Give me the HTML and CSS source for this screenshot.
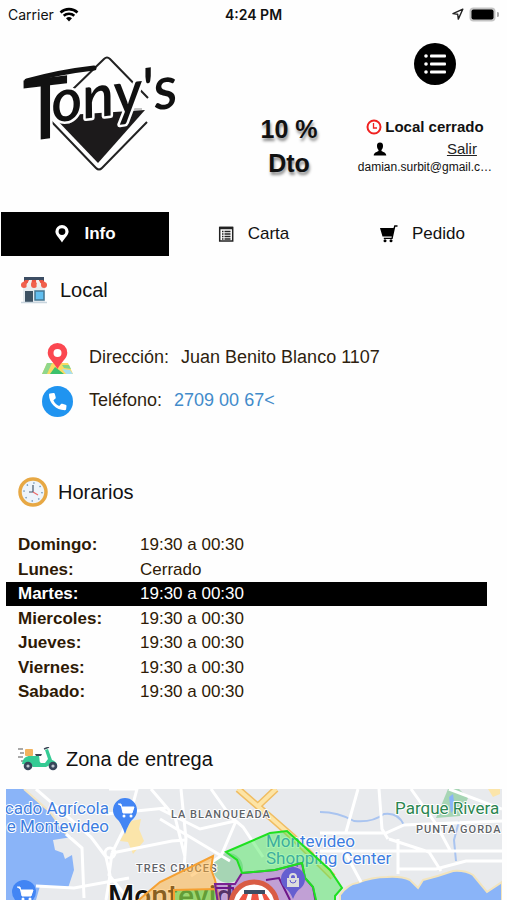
FILE: index.html
```html
<!DOCTYPE html>
<html lang="es">
  <head>
    <meta charset="UTF-8" />
    <meta name="viewport" content="width=device-width, initial-scale=1.0" />
    <title>Tony's - Info</title>
    <link rel="stylesheet" href="styles.css">
  </head>
  <body>
    <div class="status-bar">
      <div class="status-left">
        <span>Carrier</span>
        <svg width="20" height="15" viewBox="0 0 20 15" fill="none" stroke="#000" stroke-width="2.6">
          <path d="M1.500 5.500a12.500 12.500 0 0 1 17 0M4.700 8.700a8 8 0 0 1 10.600 0" />
          <path d="M10 14.500l-3-3.200a4.600 4.600 0 0 1 6 0z" fill="#000" stroke="none" />
        </svg>
      </div>
      <strong>4:24 PM</strong>
      <div class="status-right">
        <svg width="12" height="12" viewBox="0 0 12 12" fill="none" stroke="#222" stroke-width="1.4" stroke-linejoin="round">
          <path d="M10.800 1.200L1 5.600l4.700.7.600 4.800z" />
        </svg>
        <svg width="30" height="15" viewBox="0 0 30 15">
          <rect x="0.500" y="0.500" width="26" height="14" rx="4" fill="#c4c4c4" />
          <path d="M28 5a2.500 2.500 0 0 1 0 5z" fill="#aaa" />
          <rect x="2.500" y="2.500" width="22" height="10" rx="2" />
        </svg>
      </div>
    </div>

    <header class="header">
      <div class="logo">
        <svg width="180" height="150" viewBox="0 0 180 150" role="img" aria-label="Tony's">
          <path d="M61 51L94 19q3-3 6 0l38 39" fill="none" stroke="#222" stroke-width="2" />
          <path d="M118 69h14" stroke="#888" stroke-width="1" />
          <path d="M43 76l92-6-47 53z" fill="#1c1a1b" />
          <path d="M38 78l48 50q3 3 6 0l45-46" fill="none" stroke="#222" stroke-width="2" />
          <g class="logo-text" transform="rotate(-7 40 80)">
            <text x="13" y="98" class="logo-big">T</text>
            <text x="43" y="83" class="logo-small">ony's</text>
          </g>
          <path d="M17 41q32-9 67-13" fill="none" stroke="#111" stroke-width="5" stroke-linecap="round" />
        </svg>
      </div>
      <div class="discount">10 %<br>Dto</div>
      <div class="account">
        <button class="menu-btn" aria-label="Menu">
          <svg width="22" height="20" viewBox="0 0 22 20" fill="#fff">
            <circle cx="2" cy="2" r="1.800" /><circle cx="2" cy="10" r="1.800" /><circle cx="2" cy="18" r="1.800" />
            <rect x="6" y="0.500" width="16" height="3" rx="1" />
            <rect x="6" y="8.500" width="16" height="3" rx="1" />
            <rect x="6" y="16.500" width="16" height="3" rx="1" />
          </svg>
        </button>
        <div class="store-state">
          <svg width="16" height="16" viewBox="0 0 16 16" fill="none" stroke="#f0201f">
            <circle cx="8" cy="8" r="6.500" stroke-width="2" />
            <path d="M7.500 4v5h3.500" stroke-width="1.300" />
          </svg>
          <span>Local cerrado</span>
        </div>
        <div class="session">
          <svg width="14" height="14" viewBox="0 0 14 14">
            <path d="M7 0.500c2.300 0 3.200 1.500 3 3.800-.1 1.600-.8 2.900-1.500 3.600v1.200c.8.800 4.500 1.200 4.800 4.400H.7c.3-3.200 4-3.600 4.800-4.400V7.900C4.800 7.200 4.100 5.900 4 4.300 3.800 2 4.700.5 7 .5z" />
          </svg>
          <a href="#">Salir</a>
        </div>
        <div class="email">damian.surbit@gmail.c…</div>
      </div>
    </header>

    <nav class="tabs">
      <button class="tab active">
        <svg width="16" height="20" viewBox="0 0 16 20">
          <path fill="#fff" fill-rule="evenodd" d="M8 1a6.600 6.600 0 0 1 6.600 6.600C14.600 11 11 14 8 18.500 5 14 1.400 11 1.400 7.600A6.600 6.600 0 0 1 8 1zm0 3.200a3.400 3.400 0 1 0 0 6.800 3.400 3.400 0 0 0 0-6.800z" />
        </svg>
        Info
      </button>
      <button class="tab">
        <svg width="16" height="16" viewBox="0 0 16 16" fill="none" stroke="#222">
          <rect x="1.700" y="1.500" width="13" height="13.500" stroke-width="1.500" />
          <path d="M1.500 2h13.500" stroke-width="2.500" />
          <path d="M4 5.500h1.500M6.500 5.500h6M4 8h1.500M6.500 8h6M4 10.500h1.500M6.500 10.500h6M4 13h1.500M6.500 13h6" stroke-width="1.300" />
        </svg>
        Carta
      </button>
      <button class="tab">
        <svg width="18" height="18" viewBox="0 0 18 18">
          <path d="M0 3h13.500L14.300.3h3.200v1.400h-2.200L12.600 14H3.800v-1.300h7.700l.3-1.200H2.500z" />
          <circle cx="5" cy="15.800" r="1.500" /><circle cx="11" cy="15.800" r="1.500" />
        </svg>
        Pedido
      </button>
    </nav>

    <main class="content">
      <section class="store">
        <h2 class="store-title">
          <svg width="28" height="28" viewBox="0 0 28 28">
            <rect x="3" y="11" width="22" height="15" fill="#e6ecf0" />
            <rect x="4" y="1" width="20" height="4" fill="#3c4d63" />
            <path d="M5 4h4l-1 5H1z" fill="#ed5443" /><path d="M9 4h3v5H7z" fill="#f7f0f0" />
            <path d="M12 4h4l1 5h-6z" fill="#ed5443" /><path d="M16 4h3l2 5h-4z" fill="#f7f0f0" />
            <path d="M19 4h4l4 5h-6z" fill="#ed5443" />
            <circle cx="4" cy="9" r="3" fill="#f0604d" /><circle cx="9" cy="9" r="2.500" fill="#eee" />
            <circle cx="14" cy="9" r="3" fill="#f0604d" /><circle cx="19" cy="9" r="2.500" fill="#eee" />
            <circle cx="24" cy="9" r="3" fill="#f0604d" />
            <rect x="5" y="15" width="8" height="11" fill="#3d5263" />
            <rect x="15" y="15" width="9" height="9" fill="#62bff0" stroke="#467792" stroke-width="1.500" />
            <path d="M1 26.500h26" stroke="#c9d5de" stroke-width="1.500" />
          </svg>
          Local
        </h2>
        <div class="contact">
          <div class="contact-row">
            <svg width="31" height="31" viewBox="0 0 31 31">
              <path d="M5 20h21l5 11H0z" fill="#fada63" />
              <path d="M5 20h5l-5 11H0z" fill="#8fd78c" />
              <path d="M8 31l5-7 9 7z" fill="#3cc16b" />
              <path d="M20 22h7l2 4-7-1z" fill="#83d388" />
              <path d="M20 26l8 1 3 4h-7z" fill="#a8dff0" />
              <path d="M15.500 0A9.800 9.800 0 0 1 25.300 9.800c0 5.700-6 9-9.800 16.200C11.700 18.800 5.700 15.500 5.700 9.800A9.800 9.800 0 0 1 15.500 0z" fill="#fb4750" />
              <circle cx="15.500" cy="10" r="4" fill="#fff" />
            </svg>
            <p><span>Dirección:</span>Juan Benito Blanco 1107</p>
          </div>
          <div class="contact-row">
            <svg width="31" height="31" viewBox="0 0 31 31">
              <circle cx="15.500" cy="15.500" r="15.500" fill="#2094f0" />
              <path d="M8 7.500l3.500-.5c.8 0 1.200.4 1.400 1.200l.8 3c.2.700 0 1.200-.5 1.600l-1.800 1.400c1.300 2.800 3 4.500 5.800 5.800l1.600-1.700c.4-.5 1-.6 1.500-.5l3.200.9c.8.200 1 .6 1 1.300l-.4 3.200c-.2.700-.6 1-1.300 1C14 24 7 17 7 8.700c0-.7.400-1.100 1-1.200z" fill="#fff" />
            </svg>
            <p><span>Teléfono:</span><a href="tel:27090067">2709 00 67&lt;</a></p>
          </div>
        </div>
      </section>

      <section class="hours">
        <h2 class="hours-title">
          <svg width="30" height="30" viewBox="0 0 30 30">
            <circle cx="15" cy="15" r="13" fill="#edf4fb" stroke="#e7a844" stroke-width="3.500" />
            <circle cx="15" cy="15" r="9" fill="none" stroke="#6a93b5" stroke-width="1.400" stroke-dasharray="1.400 5.670" />
            <path d="M15 8v7h-4" fill="none" stroke="#44556b" stroke-width="1.200" />
            <path d="M15 15l5 3" stroke="#ec6a6a" stroke-width="1.200" />
          </svg>
          Horarios
        </h2>
        <table class="schedule">
          <tr><th scope="row">Domingo:</th><td>19:30 a 00:30</td></tr>
          <tr><th scope="row">Lunes:</th><td>Cerrado</td></tr>
          <tr class="today"><th scope="row">Martes:</th><td>19:30 a 00:30</td></tr>
          <tr><th scope="row">Miercoles:</th><td>19:30 a 00:30</td></tr>
          <tr><th scope="row">Jueves:</th><td>19:30 a 00:30</td></tr>
          <tr><th scope="row">Viernes:</th><td>19:30 a 00:30</td></tr>
          <tr><th scope="row">Sabado:</th><td>19:30 a 00:30</td></tr>
        </table>
      </section>

      <section class="delivery">
        <h2 class="delivery-title">
          <svg width="40" height="24" viewBox="0 0 40 24">
            <path d="M0 2h5M2 6h4M0 10h5M3 14h4" stroke="#555" stroke-width="1.200" />
            <rect x="7" y="2" width="8" height="7" rx="1" fill="#f2b35e" />
            <path d="M17 7h7l-1 2h-5z" fill="#3b4656" />
            <path d="M4 17c1-6 4-8 8-8h9c1 4 0 6 2 7h4l3-4-3-9 3-1 4 11c3 1 5 3 5 5h-7l-4 2H15l-3-2z" fill="#35cb94" />
            <path d="M26 2l5-2" stroke="#3b4656" stroke-width="1.500" />
            <circle cx="10" cy="19" r="4.300" fill="#38465a" /><circle cx="10" cy="19" r="1.600" fill="#bcc6d0" />
            <circle cx="35" cy="19" r="4.300" fill="#38465a" /><circle cx="35" cy="19" r="1.600" fill="#bcc6d0" />
          </svg>
          Zona de entrega
        </h2>
        <svg class="map" viewBox="0 0 496 111" preserveAspectRatio="xMidYMin slice" role="img" aria-label="Zona de entrega">
          <rect width="496" height="111" fill="#e8eaed" />
          <!-- water and parks -->
          <path d="M0 0h18l26 23 16 22 6 3-19 3 2 10 8 3 2 6 7-4 2 15-6 18-28-2-4 14H0z" fill="#8ab4f8" />
          <path d="M18 0l26 23 16 22" fill="none" stroke="#f3e5c3" stroke-width="2" />
          <path d="M334 106q8-11 17-12 15-6 30-6 14-1 23 3l8 8 5-8q16-4 30-9 12-1 20 4l14 17 15-10v24H334z" fill="#8ab4f8" stroke="#f2e4bd" stroke-width="2" />
          <path d="M430 29l12-29h11l9 9-8 18z" fill="#a6d5b4" />
          <path d="M443 8l4-3 2 14-4 5z" fill="#8ab4f8" />
          <path d="M125 32l10-2-2 10 5 12-11 13-5-12-8-1z" fill="#fbe5aa" />
          <path d="M482 0h12v5l-7 3z" fill="#fbe5aa" />
          <circle cx="222" cy="79" r="15" fill="#a6d5b4" />
          <path d="M314 23q18 0 34 9 18 2 30-7 14-2 20 11" fill="none" stroke="#a9c4f0" stroke-width="2" />
          <path d="M453 32l-5 19 2 21" fill="none" stroke="#a9c4f0" stroke-width="2" />
          <!-- streets -->
          <g fill="none" stroke="#fff" stroke-width="3">
            <path d="M30 0l55 48 15 20 4 18-4 25M103 0l28 0-8 30-17 34M106 64l60-12 14-1M106 64l-3 22 20 25M60 45l16 14 2 50" />
            <circle cx="104" cy="64" r="5" />
            <path d="M30 97l38 2 55-10M145 0l24 28 10 40M175 0l5 50-2 30M205 0l20 28 12 10 20 30M230 32l-15 35-30 20M154 30l70 42M154 20l40 20 35-8M100 25l60-6" />
            <path d="M352 0l-12 43M373 0l3 40 6 10M314 44h66l18-8 98-4M383 50l40 13 12 19M314 62l72 0h110M392 50v35M340 65l15 28M392 80h38l30-8h36M405 0l25 35 15 28M443 0l53 20" />
          </g>
          <path d="M232 0l55 48 40 40M270 0l-18 17" fill="none" stroke="#f0bd62" stroke-width="7" />
          <path d="M232 0l55 48 40 40M270 0l-18 17" fill="none" stroke="#fde4a5" stroke-width="4" />
          <!-- labels under the zones -->
          <text x="102" y="117" class="map-city">Montevideo</text>
          <text x="130" y="83" class="map-area">TRES CRUCES</text>
          <text x="260" y="58" class="map-place">Montevideo</text>
          <text x="260" y="75" class="map-place">Shopping Center</text>
          <!-- delivery zones -->
          <path d="M128 115l26-22 53-26-2 13 4 11 5 24z" fill="#ffad33" fill-opacity="0.500" stroke="#f5a032" stroke-width="2" />
          <path d="M168 115v-14l41-1 5 15z" fill="#3ddc4b" fill-opacity="0.500" stroke="#f5a032" stroke-width="2" />
          <path d="M209 95h20l7-11 33-3 27-7 3 15 8 9 3 17H212z" fill="#9a55bd" fill-opacity="0.500" stroke="#7b2192" stroke-width="2" />
          <path d="M210 99h17l2 12M260 91l13-2 11 22" fill="none" stroke="#6d1688" stroke-width="2" />
          <path d="M220 63l44-19 17-2 43 39 12 18-7 8v8h-18l-4-17-8-9-3-15-27 7-33 3-5-13z" fill="#3ee64f" fill-opacity="0.450" stroke="#1fe021" stroke-width="2" />
          <!-- pins -->
          <path d="M119 45q-4-12-9-16a12 12 0 1 1 18 0q-5 4-9 16z" fill="#4285f4" />
          <path d="M112 15h3l2 9h9l2-6h-12" fill="#fff" stroke="#fff" stroke-width="1" />
          <circle cx="118" cy="27" r="1.500" fill="#fff" /><circle cx="125" cy="27" r="1.500" fill="#fff" />
          <circle cx="18" cy="103" r="12" fill="#4285f4" />
          <path d="M11 98h3l2 9h9l2-6H15" fill="#fff" stroke="#fff" stroke-width="1" />
          <circle cx="17" cy="110" r="1.500" fill="#fff" /><circle cx="24" cy="110" r="1.500" fill="#fff" />
          <path d="M287 110q-3-8-8-11a12 12 0 1 1 16 0q-5 3-8 11z" fill="#655fd0" />
          <path d="M281 89h12v9h-12z" fill="#ddd" />
          <path d="M284 89v-1a3 3 0 0 1 6 0v1" fill="none" stroke="#ddd" stroke-width="2" />
          <path d="M284 91a3 3 0 0 0 6 0" fill="none" stroke="#655fd0" stroke-width="1" />
          <circle cx="248" cy="116" r="23" fill="#fff" stroke="#d95c45" stroke-width="5" />
          <path d="M238 103h21" stroke="#3c4d63" stroke-width="4" />
          <path d="M237 105h23l4 6h-31z" fill="#ed5443" />
          <path d="M242 105h4l-1 6h-5zM252 105h4l2 6h-5z" fill="#fff" />
          <text x="103" y="25" class="map-place" text-anchor="end">cado Agrícola</text>
          <text x="103" y="43" class="map-place" text-anchor="end">e Montevideo</text>
          <text x="165" y="29" class="map-area">LA BLANQUEADA</text>
          <text x="389" y="25" class="map-place map-park">Parque Rivera</text>
          <text x="410" y="44" class="map-area">PUNTA GORDA</text>
        </svg>
      </section>
    </main>
  </body>
</html>
```
FILE: styles.css
```css
* {
  box-sizing: border-box;
}

body {
  margin: 0;
  background: #fefefe;
  color: #111;
  font-family: "Liberation Sans", Arial, sans-serif;
  font-size: 17px;
}

svg {
  display: block;
  flex-shrink: 0;
}

/* Barra de estado */
.status-bar {
  display: grid;
  grid-template-columns: 1fr auto 1fr;
  align-items: center;
  height: 28px;
  padding: 0 8px;
  font-family: Inter, sans-serif;
  font-size: 14px;
}

.status-bar strong {
  font-weight: 600;
}

.status-left,
.status-right {
  display: flex;
  align-items: center;
  gap: 5px;
}

.status-right {
  justify-content: flex-end;
}

/* Cabecera */
.header {
  display: grid;
  grid-template-columns: 44% 26% 30%;
  height: 184px;
}

.logo {
  padding: 12px 0 0 10px;
}

.logo-text {
  font-family: Lato, sans-serif;
  font-style: italic;
  font-weight: 600;
  fill: #111;
  stroke: #fff;
  stroke-width: 5px;
  stroke-linejoin: round;
  paint-order: stroke;
}

.logo-big {
  font-size: 84px;
}

.logo-small {
  font-size: 60px;
}

.discount {
  padding-top: 84px;
  text-align: center;
  font-size: 25px;
  font-weight: bold;
  line-height: 34px;
  text-shadow: 1px 3px 3px rgba(0, 0, 0, 0.45);
}

.account {
  display: flex;
  flex-direction: column;
  align-items: center;
  padding: 15px 12px 0 0;
}

.menu-btn {
  display: flex;
  align-items: center;
  justify-content: center;
  width: 42px;
  height: 42px;
  margin: 0 0 30px 20px;
  padding: 0;
  border: none;
  border-radius: 50%;
  background: #000;
  cursor: pointer;
}

.store-state {
  display: flex;
  align-items: center;
  gap: 3px;
  font-size: 15px;
  font-weight: bold;
  line-height: 24px;
}

.session {
  display: flex;
  align-items: center;
  gap: 60px;
  font-size: 15px;
  line-height: 20px;
}

.session a {
  color: #222;
}

.email {
  font-size: 12px;
  line-height: 16px;
}

/* Pestañas */
.tabs {
  display: grid;
  grid-template-columns: repeat(3, 1fr);
}

.tab {
  display: flex;
  align-items: center;
  justify-content: center;
  gap: 14px;
  height: 44px;
  padding: 0;
  border: none;
  background: none;
  color: #111;
  font-family: inherit;
  font-size: 17px;
  cursor: pointer;
}

.tab.active {
  margin-left: 1px;
  background: #000;
  color: #fff;
  font-weight: bold;
}

/* Secciones */
.content {
  padding: 0 5px 0 6px;
}

h2 {
  display: flex;
  align-items: center;
  height: 30px;
  margin: 0;
  font-size: 20px;
  font-weight: normal;
}

.store-title {
  gap: 12px;
  padding-left: 14px;
}

.hours-title {
  gap: 10px;
  padding-left: 12px;
}

.delivery-title {
  gap: 8px;
  padding-left: 12px;
}

.store {
  padding-top: 19px;
}

.contact {
  display: flex;
  flex-direction: column;
  gap: 12px;
  padding: 38px 0 0 36px;
}

.contact-row {
  display: flex;
  gap: 16px;
  color: #2e1f10;
  font-size: 18px;
}

.contact-row p {
  margin: 0;
  line-height: 28px;
}

.contact-row span {
  margin-right: 12px;
}

.contact-row a {
  color: #428bca;
  text-decoration: none;
}

/* Horarios */
.hours {
  padding-top: 60px;
}

.schedule {
  width: 97%;
  margin-top: 26px;
  border-collapse: collapse;
  color: #2e1a05;
}

.schedule th,
.schedule td {
  height: 24px;
  padding: 0;
  line-height: 24px;
  text-align: left;
}

.schedule tr:nth-child(even) > * {
  height: 25px;
}

.schedule th {
  width: 134px;
  padding-left: 12px;
}

.schedule .today {
  background: #000;
  color: #fff;
}

/* Zona de entrega */
.delivery {
  padding-top: 40px;
}

.map {
  width: 100%;
  height: 111px;
  margin-top: 15px;
}

.map text {
  font-family: Roboto, sans-serif;
  stroke: #fff;
  stroke-width: 2px;
  stroke-linejoin: round;
  paint-order: stroke;
}

.map-place {
  fill: #3d7de0;
  font-size: 17px;
}

.map .map-park {
  fill: #2a8550;
}

.map-area {
  fill: #5f6368;
  font-size: 11px;
  font-weight: 500;
  letter-spacing: 1px;
}

.map-city {
  fill: #111;
  font-size: 30px;
  font-weight: 500;
}
```
